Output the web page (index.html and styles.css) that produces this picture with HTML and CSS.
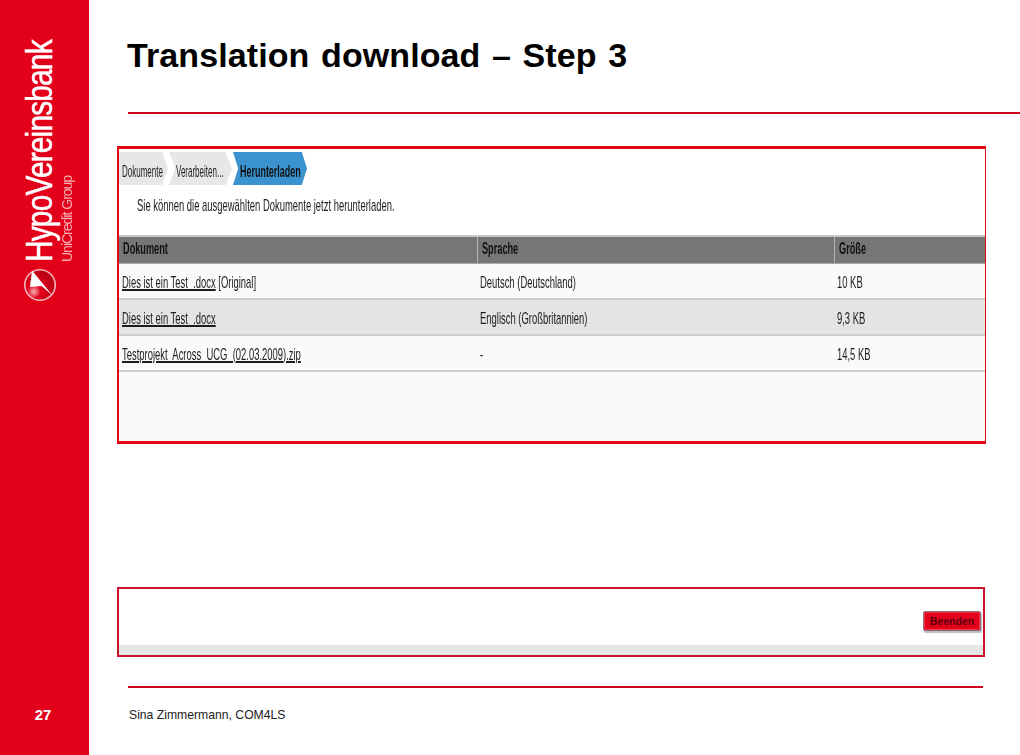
FILE: index.html
```html
<!DOCTYPE html>
<html lang="de">
<head>
<meta charset="utf-8">
<title>Translation download – Step 3</title>
<link rel="stylesheet" href="styles.css">
</head>
<body>
<div class="slide">
  <aside class="side">
    <div class="brand">
      <div class="wordmark">
        <div class="hvb">HypoVereinsbank</div>
        <div class="ucg">UniCredit Group</div>
      </div>
      <svg class="emblem" width="36" height="36" viewBox="0 0 36 36" aria-hidden="true">
        <defs>
          <radialGradient id="ball" cx="0.3" cy="0.72" r="0.75">
            <stop offset="0" stop-color="#f9b4b9"/>
            <stop offset="0.3" stop-color="#e2001a"/>
            <stop offset="1" stop-color="#b80016"/>
          </radialGradient>
        </defs>
        <circle cx="18" cy="18" r="15.2" fill="url(#ball)" stroke="#f4b3b8" stroke-width="1.6"/>
        <path d="M10 3.5 L30.5 28.5 L19.5 19 L8 20 Z" fill="#fff"/>
      </svg>
    </div>
    <div class="page-no">27</div>
  </aside>
  <main class="content">
    <h1 class="title">Translation download – Step 3</h1>
    <div class="rule-top"></div>
    <section class="shot">
      <div class="tabs">
        <div class="tab first"><span class="sq">Dokumente</span></div>
        <div class="tab mid"><span class="sq">Verarbeiten...</span></div>
        <div class="tab active"><span class="sq">Herunterladen</span></div>
      </div>
      <p class="hint"><span class="sq">Sie können die ausgewählten Dokumente jetzt herunterladen.</span></p>
      <div class="grid">
        <div class="row head">
          <div class="cell"><span class="sq">Dokument</span></div>
          <div class="cell"><span class="sq">Sprache</span></div>
          <div class="cell"><span class="sq">Größe</span></div>
        </div>
        <div class="row">
          <div class="cell"><span class="sq"><u>Dies ist ein Test&nbsp; .docx</u> [Original]</span></div>
          <div class="cell"><span class="sq">Deutsch (Deutschland)</span></div>
          <div class="cell"><span class="sq">10 KB</span></div>
        </div>
        <div class="row alt">
          <div class="cell"><span class="sq"><u>Dies ist ein Test&nbsp; .docx</u></span></div>
          <div class="cell"><span class="sq">Englisch (Großbritannien)</span></div>
          <div class="cell"><span class="sq">9,3 KB</span></div>
        </div>
        <div class="row">
          <div class="cell"><span class="sq"><u>Testprojekt&nbsp; Across&nbsp; UCG&nbsp; (02.03.2009).zip</u></span></div>
          <div class="cell"><span class="sq">-</span></div>
          <div class="cell"><span class="sq">14,5 KB</span></div>
        </div>
        <div class="empty"></div>
      </div>
    </section>
    <section class="actions">
      <div class="action-body"><button class="finish" type="button">Beenden</button></div>
      <div class="strip"></div>
    </section>
    <div class="rule-bottom"></div>
    <div class="author">Sina Zimmermann, COM4LS</div>
  </main>
</div>
</body>
</html>
```
FILE: styles.css
```css
* { box-sizing: border-box; }
html, body { margin: 0; padding: 0; height: 100%; background: #fff; overflow: hidden; }
body { font-family: "Liberation Sans", Arial, sans-serif; color: #1a1a1a; }

.slide { display: flex; width: 1020px; height: 755px; }

.side {
  width: 89px; flex: none; background: #e2001a;
  display: flex; flex-direction: column; justify-content: space-between;
}
.brand { display: flex; flex-direction: column; align-items: flex-start; padding: 37px 0 0 22px; }
.wordmark {
  writing-mode: vertical-rl; transform: rotate(180deg);
  color: #fff; white-space: nowrap; height: 225px; margin-left: 2px;
}
.hvb {
  font-size: 36px; line-height: 31px; letter-spacing: -1px; -webkit-text-stroke: .5px #fff;
  transform: scaleY(.83); transform-origin: center top;
}
.ucg { font-size: 14px; line-height: 17px; color: #f7b0b5; letter-spacing: -1px; margin-right: 4px; }
.emblem { margin-top: 5px; display: block; }
.page-no {
  color: #fff; font-weight: 700; font-size: 15px; line-height: 18px;
  text-align: center; padding: 0 0 31px 0; margin-right: 3px;
}

.content { flex: 1; min-width: 0; }
.title {
  margin: 34px 0 0 38px; font-size: 34px; line-height: 42px; font-weight: 700;
  color: #000; word-spacing: 2px; letter-spacing: .1px; white-space: nowrap;
}
.rule-top { height: 2px; margin: 36px 0 0 39px; background: #d0021b; }

.sq {
  display: inline-block; transform: scaleX(.555); transform-origin: left center;
  white-space: nowrap; filter: blur(.25px);
}

.shot {
  margin: 32px 0 0 28px; width: 869px; height: 298px;
  border: solid #e30613; border-width: 3px 1px 3px 2px;
  background: #fff; display: flex; flex-direction: column;
}
.tabs { display: flex; padding: 3px 0 0 0; gap: 1px; height: 36px; font-size: 16px; }
.tabs .sq { transform: scaleX(.5); }
.tab { height: 33px; padding-top: 6px; display: flex; align-items: center; background: #e7e7e7; color: #222; }
.tab.first { width: 49px; padding-left: 3px; clip-path: polygon(0 0, 88% 0, 100% 50%, 88% 100%, 0 100%); }
.tab.mid { width: 63px; padding-left: 7px; clip-path: polygon(0 0, 90% 0, 100% 50%, 90% 100%, 0 100%, 10% 50%); }
.tab.active {
  width: 74px; padding-left: 7px; background: #3a93cf; color: #111; font-weight: 700;
  clip-path: polygon(0 0, 93% 0, 100% 50%, 93% 100%, 0 100%, 7% 50%);
}
.tab.active .sq { transform: scaleX(.56); }
.hint { margin: 11px 0 0 18px; font-size: 17px; line-height: 20px; height: 39px; color: #1c1c1c; }

.grid { flex: 1; display: flex; flex-direction: column; background: #fafafa; }
.row {
  display: grid; grid-template-columns: 358px 357px 1fr; height: 36px;
  align-items: center; font-size: 17px; color: #1c1c1c;
  background: #fafafa; border-bottom: 2px solid #cdcdcd;
}
.row.alt { background: #e4e4e4; }
.row.head {
  height: 29px; background: #767676; color: #111; font-weight: 700;
  grid-template-columns: 359px 357px 1fr;
  border-top: 2px solid #c9c9c9; border-bottom: 1px solid #aaa;
}
.row.head .sq { transform: scaleX(.54); }
.row.head .cell {
  height: 100%; display: flex; align-items: center; border-right: 1px solid #b5b5b5;
  padding: 0 0 3px 4px;
}
.row.head .cell:last-child { border-right: 0; }
.cell { padding: 3px 0 0 3px; min-width: 0; }
.cell u { text-decoration-thickness: 1.5px; text-underline-offset: 1px; }
.empty { flex: 1; }

.actions {
  margin: 143px 0 0 28px; width: 868px; height: 70px;
  border: 2px solid #c9142b; background: #fff; display: flex; flex-direction: column;
}
.action-body { flex: 1; display: flex; justify-content: flex-end; align-items: flex-start; padding: 22px 2px 0 0; }
.finish {
  width: 58px; height: 20px; padding: 0; background: #e2001a; color: #5c0010;
  font: 700 10.5px/16px "Liberation Sans", Arial, sans-serif;
  border: 1px solid #8d6b78; border-radius: 2px; box-shadow: 1px 2px 1px #bdbdbd, inset 0 0 0 1px #f0314a;
}
.strip { height: 10px; background: #e4e6e6; }

.rule-bottom { height: 2px; margin: 29px 37px 0 39px; background: #d0021b; }
.author { margin: 20px 0 0 40px; font-size: 12.2px; line-height: 14px; color: #222; }
```
